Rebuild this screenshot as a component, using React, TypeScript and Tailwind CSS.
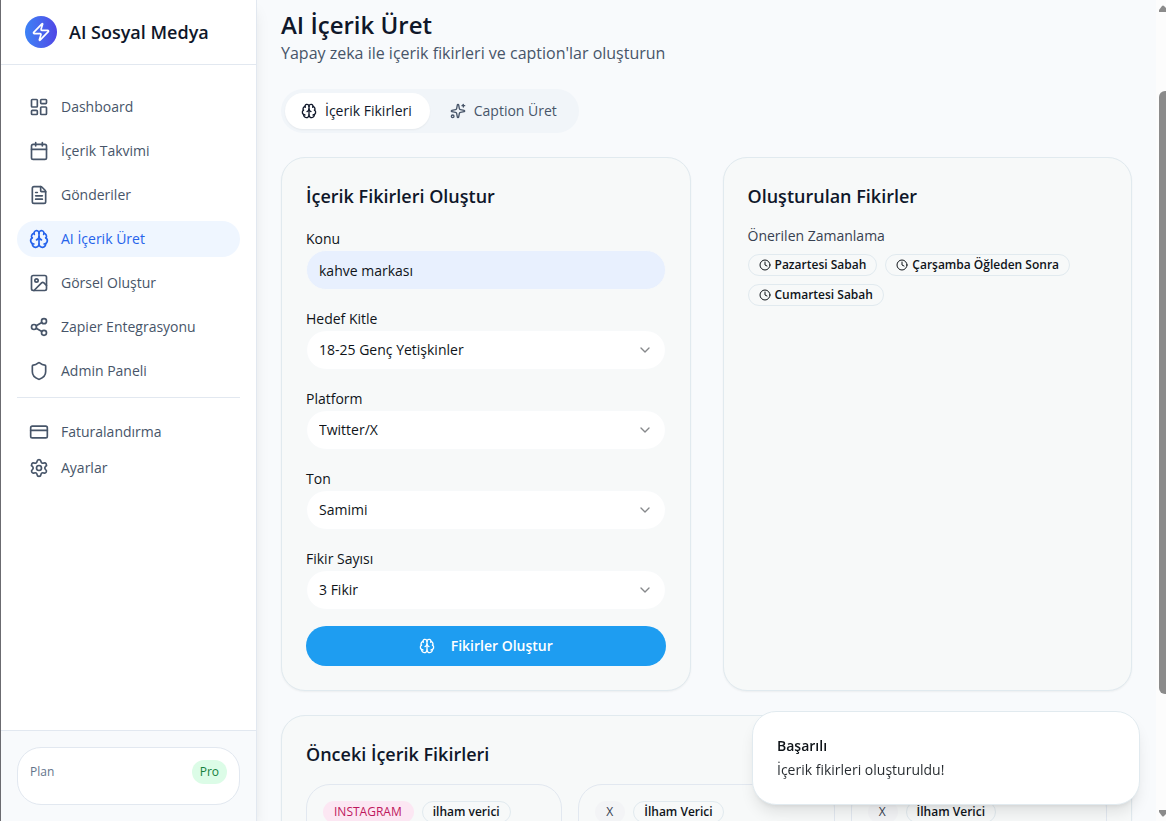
import React from "react";
import {
  Brain,
  Calendar,
  ChevronDown,
  Clock,
  CreditCard,
  FileText,
  Image,
  LayoutDashboard,
  Settings,
  Share2,
  Shield,
  Sparkles,
  Zap,
} from "lucide-react";
import type { LucideIcon } from "lucide-react";

const mainNav: { label: string; icon: LucideIcon; active?: boolean }[] = [
  { label: "Dashboard", icon: LayoutDashboard },
  { label: "İçerik Takvimi", icon: Calendar },
  { label: "Gönderiler", icon: FileText },
  { label: "AI İçerik Üret", icon: Brain, active: true },
  { label: "Görsel Oluştur", icon: Image },
  { label: "Zapier Entegrasyonu", icon: Share2 },
  { label: "Admin Paneli", icon: Shield },
];

const secondaryNav = [
  { label: "Faturalandırma", icon: CreditCard },
  { label: "Ayarlar", icon: Settings },
];

const selects = [
  { id: "audience", label: "Hedef Kitle", options: ["18-25 Genç Yetişkinler"] },
  { id: "platform", label: "Platform", options: ["Twitter/X"] },
  { id: "tone", label: "Ton", options: ["Samimi"] },
  { id: "count", label: "Fikir Sayısı", options: ["3 Fikir"] },
];

const schedule = ["Pazartesi Sabah", "Çarşamba Öğleden Sonra", "Cumartesi Sabah"];

const previousIdeas = [
  { platform: "INSTAGRAM", tone: "ilham verici", color: "bg-[#fce7f3] text-[#be185d]" },
  { platform: "X", tone: "İlham Verici", color: "bg-[#f3f4f6] text-[#374151]" },
  { platform: "X", tone: "İlham Verici", color: "bg-[#f3f4f6] text-[#374151]" },
];

function NavItem({ label, icon: Icon, active }: { label: string; icon: LucideIcon; active?: boolean }) {
  return (
    <a
      href="#"
      className={
        active
          ? "flex h-9 items-center gap-3 rounded-full bg-[#eff6ff] px-3 text-sm font-medium text-[#2563eb]"
          : "flex h-9 items-center gap-3 rounded-full px-3 text-sm font-medium text-[#475569]"
      }
    >
      <Icon className="size-5 shrink-0" />
      {label}
    </a>
  );
}

function Sidebar() {
  return (
    <aside className="z-10 flex w-64 shrink-0 flex-col border-r border-[#e2e8f0] bg-white shadow-lg">
      <div className="flex items-center gap-3 border-b border-[#e2e8f0] px-6 py-4">
        <span className="flex size-8 items-center justify-center rounded-full bg-linear-to-r from-[#3b82f6] to-[#4f46e5] text-white">
          <Zap className="size-5" />
        </span>
        <span className="text-lg font-semibold text-[#0f172a]">AI Sosyal Medya</span>
      </div>
      <nav className="flex-1 px-4 py-6">
        <div className="flex flex-col gap-2">
          {mainNav.map((item) => (
            <NavItem key={item.label} {...item} />
          ))}
        </div>
        <div className="mt-2 border-t border-[#e2e8f0] pt-4">
          {secondaryNav.map((item) => (
            <NavItem key={item.label} {...item} />
          ))}
        </div>
      </nav>
      <div className="border-t border-[#e2e8f0] bg-slate-50 p-4">
        <div className="rounded-3xl border border-[#e2e8f0] bg-white p-3">
          <div className="mb-2 flex items-center justify-between text-xs font-medium">
            <span className="text-[#64748b]">Plan</span>
            <span className="rounded-full bg-[#dcfce7] px-2 py-1 text-[#15803d]">Pro</span>
          </div>
        </div>
      </div>
    </aside>
  );
}

function Card({ title, children }: { title: string; children: React.ReactNode }) {
  return (
    <section className="rounded-3xl border border-[#e1eaef] bg-[#f7f9f9] p-6 shadow-xs">
      <h2 className="mb-4 text-lg font-semibold text-[#0f172a]">{title}</h2>
      {children}
    </section>
  );
}

function OutlineBadge({ children }: { children: React.ReactNode }) {
  return (
    <span className="inline-flex items-center rounded-full border border-[#e1eaef] px-2.5 py-0.5 text-xs font-semibold text-[#0f1419]">
      {children}
    </span>
  );
}

function IdeaForm() {
  return (
    <form className="flex flex-col gap-4" onSubmit={(e) => e.preventDefault()}>
      <div>
        <label htmlFor="topic" className="text-sm font-medium text-[#0f1419]">
          Konu
        </label>
        <input
          id="topic"
          type="text"
          defaultValue="kahve markası"
          className="block h-10 w-full rounded-[20px] border border-[#f7f9fa] bg-[#e8f0fe] px-3 text-sm text-[#0f1419] outline-none"
        />
      </div>
      {selects.map(({ id, label, options }) => (
        <div key={id}>
          <label htmlFor={id} className="text-sm font-medium text-[#0f1419]">
            {label}
          </label>
          <div className="relative">
            <select
              id={id}
              className="block h-10 w-full appearance-none rounded-[20px] border border-[#f7f9fa] bg-white px-3 text-sm text-[#0f1419] outline-none"
            >
              {options.map((option) => (
                <option key={option}>{option}</option>
              ))}
            </select>
            <ChevronDown className="pointer-events-none absolute inset-y-0 right-[13px] my-auto size-4 text-[#0f1419] opacity-50" />
          </div>
        </div>
      ))}
      <button
        type="submit"
        className="flex h-10 w-full items-center justify-center gap-4 rounded-[20px] bg-[#1e9df1] text-sm font-semibold text-white"
      >
        <Brain className="size-4" />
        Fikirler Oluştur
      </button>
    </form>
  );
}

export default function App() {
  return (
    <div className="flex h-screen overflow-hidden border-l border-[#6b6b70] bg-slate-50 font-['Open_Sans',sans-serif] text-[#0f172a]">
      <Sidebar />
      <main className="min-w-0 flex-1 overflow-hidden px-6 pt-[9px]">
        <h1 className="text-2xl font-semibold">AI İçerik Üret</h1>
        <p className="text-base text-[#475569]">Yapay zeka ile içerik fikirleri ve caption'lar oluşturun</p>

        <div role="tablist" className="my-6 inline-flex gap-1 rounded-full bg-[#f1f5f9] p-1 align-top text-sm font-medium">
          <button
            type="button"
            role="tab"
            aria-selected="true"
            className="flex h-9 items-center gap-2 rounded-full bg-white pr-[18px] pl-4 text-[#0f172a] shadow-xs"
          >
            <Brain className="size-4" />
            İçerik Fikirleri
          </button>
          <button
            type="button"
            role="tab"
            aria-selected="false"
            className="flex h-9 items-center gap-2 rounded-full pr-[18px] pl-4 text-[#475569]"
          >
            <Sparkles className="size-4" />
            Caption Üret
          </button>
        </div>

        <div className="grid grid-cols-2 gap-8">
          <Card title="İçerik Fikirleri Oluştur">
            <IdeaForm />
          </Card>
          <Card title="Oluşturulan Fikirler">
            <h3 className="mb-2 text-sm font-medium text-[#374151]">Önerilen Zamanlama</h3>
            <div className="flex flex-wrap gap-2">
              {schedule.map((slot) => (
                <OutlineBadge key={slot}>
                  <Clock className="mr-1 size-3" />
                  {slot}
                </OutlineBadge>
              ))}
            </div>
          </Card>
        </div>

        <div className="mt-6">
          <Card title="Önceki İçerik Fikirleri">
            <div className="grid grid-cols-3 gap-4">
              {previousIdeas.map((idea, i) => (
                <article key={i} className="min-h-48 rounded-3xl border border-[#e2e8f0] p-4">
                  <div className="flex items-center gap-2">
                    <span className={`rounded-full border border-transparent py-0.5 pr-[11px] pl-2.5 text-xs font-medium ${idea.color}`}>
                      {idea.platform}
                    </span>
                    <OutlineBadge>{idea.tone}</OutlineBadge>
                  </div>
                </article>
              ))}
            </div>
          </Card>
        </div>
      </main>

      <div aria-hidden="true" className="flex w-2.5 shrink-0 flex-col items-end overflow-hidden bg-[#fcfcfc]">
        <svg viewBox="0 0 7 12" className="h-3 w-[7px] shrink-0" fill="#8b8b8b">
          <path d="M0 12 L0 10 L3 6 Q4 5 5 6 L7 8 L7 12 Z" />
        </svg>
        <div className="mt-[79px] h-[603px] w-[7px] rounded-l-md bg-[#8b8b8b]" />
        <svg viewBox="0 0 7 12" className="mt-auto h-3 w-[7px] shrink-0" fill="#8b8b8b">
          <path d="M0 1 L7 1 L7 5 L5 7 Q4 8 3 7 L0 3 Z" />
        </svg>
      </div>

      <div
        role="status"
        className="fixed right-[26px] bottom-4 z-20 w-[388px] rounded-3xl border border-[#e1eaef] bg-white p-6 shadow-lg"
      >
        <div className="mb-1 text-sm font-semibold text-[#0f1419]">Başarılı</div>
        <div className="text-sm text-[#0f1419] opacity-90">İçerik fikirleri oluşturuldu!</div>
      </div>
    </div>
  );
}
